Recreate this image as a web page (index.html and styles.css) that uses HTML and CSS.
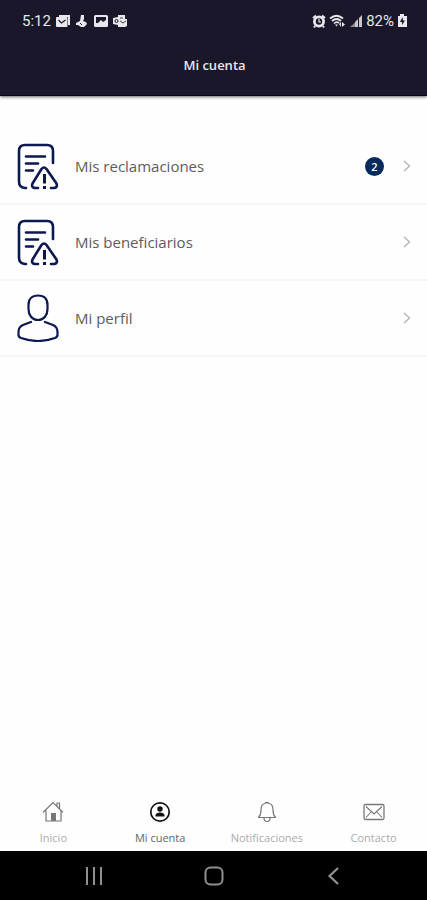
FILE: index.html
```html
<!DOCTYPE html>
<html lang="es">
<head>
<meta charset="utf-8">
<meta name="viewport" content="width=device-width, initial-scale=1">
<title>Mi cuenta</title>
<link rel="stylesheet" href="styles.css">
</head>
<body>
<svg class="defs" aria-hidden="true">
  <symbol id="claim" viewBox="0 0 42 48">
    <g fill="none" stroke="currentColor" stroke-linecap="round" stroke-linejoin="round">
      <path stroke-width="2.6" d="M9 46H8Q2 45.500 2 39.500V9Q2 3 8 3H30Q36 3 36 9V21"/>
      <path stroke-width="2.600" d="M9 14.500H28M9 21.500H21M9 28.500H16"/>
      <path stroke-width="2.600" d="M21 46H17.500Q14 45 15.500 41.500L24.500 27Q27 24 29.500 27L39.500 41.500Q41 45 37.500 46H34"/>
      <path stroke-width="3" stroke-linecap="butt" d="M27.500 32V41.500M27.500 44V47"/>
    </g>
  </symbol>
  <symbol id="person" viewBox="0 0 42 48">
    <g fill="none" stroke="currentColor" stroke-width="2.200" stroke-linecap="round" stroke-linejoin="round">
      <path d="M21 1.500C27 1.500 30.500 5 30.500 11V15C30.500 21 27 26 21 26S11.500 21 11.500 15V11C11.500 5 15 1.500 21 1.500Z"/>
      <path d="M14 28L6 31Q1.500 33 1.500 38V41Q1.500 43 4 44Q21 50 38 44Q40.500 43 40.500 41V38Q40.500 33 36 31L28 28"/>
    </g>
  </symbol>
  <symbol id="chevron" viewBox="0 0 8 12">
    <path d="M1 1L6.500 6L1 11" fill="none" stroke="currentColor" stroke-width="1.400"/>
  </symbol>
</svg>
<div class="app">
  <header class="top">
    <div class="status">
      <div class="status-group">
        <span class="clock">5:12</span>
        <svg class="mini" viewBox="0 0 14 14"><path fill="currentColor" d="M3 1H14V11H12V3H3Z"/><rect y="3" width="11.500" height="10" rx="1" fill="currentColor"/><path d="M2.500 6L5.500 9L9.500 6" fill="none" stroke="#1a172b" stroke-width="1.200"/></svg>
        <svg class="mini" viewBox="0 0 14 14"><path fill="currentColor" d="M6 1H9V5L8 7L11 8L12 10L9 13H6L3 11H1V9L5 7Z"/><path d="M5 9L7 11" stroke="#1a172b"/></svg>
        <svg class="mini" viewBox="0 0 14 14"><rect y="1" width="14" height="12" rx="1.500" fill="currentColor"/><path d="M2 3H12V6L9 8L7 6L4 9H2Z" fill="#1a172b"/></svg>
        <svg class="mini" viewBox="0 0 14 14"><path fill="currentColor" d="M5 1H12V5H14V12L12 13H5V11L0 10V4L5 3Z"/><circle cx="3.500" cy="7" r="1.500" fill="none" stroke="#1a172b"/><path d="M7 7L10 9L13 7M7 4H10" fill="none" stroke="#1a172b" stroke-width=".8"/></svg>
      </div>
      <div class="status-group tight">
        <svg class="mini" viewBox="0 0 14 14"><circle cx="7" cy="7.500" r="4.600" fill="none" stroke="currentColor" stroke-width="2.800"/><path d="M1 4L4 1.500M13 4L10 1.500M3 12L2 13.500M11 12L12 13.500" stroke="currentColor" stroke-width="2"/><path d="M7 5V8H9" fill="none" stroke="currentColor" stroke-width="1.200"/></svg>
        <svg class="wifi" viewBox="0 0 17 14"><path d="M1 4.500Q7.500-1 14 4.500M3 7Q7.500 3 12 7M5 9.500Q7.500 7 10 9" fill="none" stroke="currentColor" stroke-width="1.700"/><path d="M6 10.500H9L7.500 12.500ZM10 10L12 8V13ZM13 8L16 10.500L13 13Z" fill="currentColor"/></svg>
        <svg class="mini" viewBox="0 0 14 14"><path d="M1 13L9 6V13Z" fill="#8b8995"/><path d="M6 13V8L9 5V13ZM10 13V4L13 1V13Z" fill="#c9c8ce"/></svg>
        <span class="battery">82%</span>
        <svg class="cell" viewBox="0 0 10 14"><path d="M3 0H7V2H10V13H1V2H3Z" fill="currentColor"/><path d="M5.500 3L3 8H5V11L8 6.500H6Z" fill="#1a172b"/></svg>
      </div>
    </div>
    <h1 class="title">Mi cuenta</h1>
  </header>
  <main class="list">
    <a class="row" href="#reclamaciones">
      <svg class="row-icon"><use href="#claim"/></svg>
      <span class="row-label">Mis reclamaciones</span>
      <span class="count">2</span>
      <svg class="chevron"><use href="#chevron"/></svg>
    </a>
    <a class="row" href="#beneficiarios">
      <svg class="row-icon"><use href="#claim"/></svg>
      <span class="row-label">Mis beneficiarios</span>
      <svg class="chevron"><use href="#chevron"/></svg>
    </a>
    <a class="row" href="#perfil">
      <svg class="row-icon"><use href="#person"/></svg>
      <span class="row-label">Mi perfil</span>
      <svg class="chevron"><use href="#chevron"/></svg>
    </a>
  </main>
  <nav class="tabs">
    <a class="tab" href="#inicio">
      <svg class="tab-icon" viewBox="0 0 22 22"><path d="M1 11.500L11 1.500L21 11.500M4 9.500V20H19V9.500M15 5V2H17.500V8" fill="none" stroke="currentColor" stroke-width="1.200"/><path d="M9 20V12H14V20Z" fill="currentColor"/></svg>
      <span>Inicio</span>
    </a>
    <a class="tab active" href="#cuenta" aria-current="page">
      <svg class="tab-icon" viewBox="0 0 22 22"><circle cx="11" cy="11" r="9.200" fill="none" stroke="currentColor" stroke-width="1.700"/><circle cx="11" cy="8" r="2.700" fill="currentColor"/><path d="M6.500 15.500V14Q7 11.500 11 11.500T15.500 14V15.500Z" fill="currentColor"/></svg>
      <span>Mi cuenta</span>
    </a>
    <a class="tab" href="#notificaciones">
      <svg class="tab-icon" viewBox="0 0 22 22"><path d="M2.500 16.500Q5 14 5 9Q5 3 9 2.500Q11 .5 13 2.500Q17 3 17 9Q17 14 19.500 16.500ZM8 17Q8 20.500 11 20.500T14 17" fill="none" stroke="currentColor" stroke-width="1.200" stroke-linejoin="round"/></svg>
      <span>Notificaciones</span>
    </a>
    <a class="tab" href="#contacto">
      <svg class="tab-icon" viewBox="0 0 22 22"><rect x="1" y="3.500" width="20" height="15" rx="1.500" fill="none" stroke="currentColor" stroke-width="1.300"/><path d="M3 5.500L11 13L19 5.500M3 16.500L8 11M19 16.500L14 11" fill="none" stroke="currentColor" stroke-width="1.100"/></svg>
      <span>Contacto</span>
    </a>
  </nav>
  <div class="system">
    <button class="key" aria-label="Recientes"><svg viewBox="0 0 20 20"><path d="M3 1V19M10 1V19M17 1V19" stroke="currentColor" stroke-width="2"/></svg></button>
    <button class="key" aria-label="Inicio del teléfono"><svg viewBox="0 0 20 20"><rect x="1.500" y="1.500" width="17" height="17" rx="5" fill="none" stroke="currentColor" stroke-width="2"/></svg></button>
    <button class="key" aria-label="Atrás"><svg viewBox="0 0 20 20"><path d="M14 2L5.500 10L14 18" fill="none" stroke="currentColor" stroke-width="2.200"/></svg></button>
  </div>
</div>
</body>
</html>
```
FILE: styles.css
```css
* {
  box-sizing: border-box;
}

body {
  margin: 0;
  background: #fefefe;
  font-family: "Open Sans", "Noto Sans", sans-serif;
}

svg {
  display: block;
  flex: none;
}

a {
  color: inherit;
  text-decoration: none;
}

.defs {
  position: absolute;
  width: 0;
  height: 0;
}

.app {
  display: flex;
  flex-direction: column;
  min-height: 100vh;
}

.top {
  padding: 10px 20px 20px 22px;
  background: #1a172b;
  color: #e8e7ec;
  border-bottom: 1px solid #090519;
  box-shadow: 0 1px 3px rgba(0, 0, 0, 0.6);
}

.status {
  display: flex;
  justify-content: space-between;
  align-items: center;
  height: 22px;
  font-family: Roboto, sans-serif;
  font-size: 15px;
  line-height: 22px;
}

.status-group {
  display: flex;
  align-items: center;
  gap: 5px;
}

.tight {
  gap: 3px;
}

.mini {
  width: 14px;
  height: 14px;
}

.wifi {
  width: 17px;
  height: 14px;
}

.cell {
  width: 10px;
  height: 14px;
}

.title {
  margin: 23px 0 0;
  font-size: 13px;
  font-weight: 600;
  line-height: 20px;
  text-align: center;
}

.list {
  flex: 1;
  padding-top: 33px;
}

.row {
  display: flex;
  align-items: center;
  height: 76px;
  padding: 0 16px 0 17px;
  border-bottom: 2px solid #f7f7f7;
  color: #5c5c5c;
  font-size: 15px;
  line-height: 20px;
}

.row-icon {
  width: 42px;
  height: 48px;
  margin-right: 16px;
  color: #0c1850;
}

.row-label {
  flex: 1;
}

.count {
  width: 19px;
  height: 19px;
  margin-right: 19px;
  border-radius: 50%;
  background: #062a5c;
  color: #fff;
  font-size: 11px;
  font-weight: 600;
  line-height: 19px;
  text-align: center;
}

.chevron {
  width: 8px;
  height: 12px;
  color: #b4b4b4;
}

.tabs {
  display: grid;
  grid-template-columns: repeat(4, 1fr);
  padding-bottom: 5px;
}

.tab {
  display: flex;
  flex-direction: column;
  align-items: center;
  gap: 7px;
  color: #aaa;
  font-size: 11px;
  line-height: 16px;
}

.tab-icon {
  width: 22px;
  height: 22px;
  color: #777;
}

.active {
  color: #666;
}

.active .tab-icon {
  color: #111;
}

.system {
  display: flex;
  justify-content: center;
  gap: 100px;
  padding: 15px 0 14px;
  background: #000;
}

.key {
  width: 20px;
  height: 20px;
  padding: 0;
  border: 0;
  background: none;
  color: #909090;
}
```
